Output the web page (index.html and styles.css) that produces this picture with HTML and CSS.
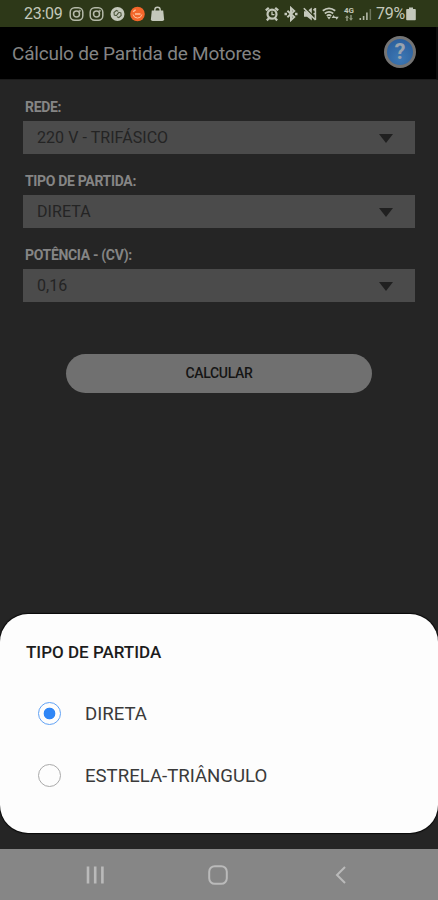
FILE: index.html
```html
<!doctype html>
<html lang="pt-BR">
<head>
    <meta charset="UTF-8">
    <title>Cálculo de Partida de Motores</title>
    <link rel="stylesheet" href="styles.css">
</head>
<body>
<div class="phone">
    <div class="status">
        <span class="clock">23:09</span>
        <div class="notices">
            <svg width="15" height="16" viewBox="0 0 15 16" fill="none" stroke="#b4b9a8" stroke-width="1.5">
                <rect x="1.2" y="1.7" width="12.6" height="12.6" rx="4.5"/>
                <circle cx="7.5" cy="8" r="3"/>
                <circle cx="10.7" cy="4.9" r=".3"/>
            </svg>
            <svg width="15" height="16" viewBox="0 0 15 16" fill="none" stroke="#b4b9a8" stroke-width="1.5">
                <rect x="1.2" y="1.7" width="12.6" height="12.6" rx="4.5"/>
                <circle cx="7.5" cy="8" r="3"/>
                <circle cx="10.7" cy="4.9" r=".3"/>
            </svg>
            <svg width="15" height="16" viewBox="0 0 15 16" fill="none" stroke="#4d573c" stroke-width="1.1">
                <circle cx="7.5" cy="8" r="7" fill="#c4c8bb" stroke="none"/>
                <path d="M8.2 5.2L6.4 4.4 4 6.5l.3 2.6 2 .6 1.7-2M7 10.8l1.8.8 2.4-2.1-.3-2.6-2-.6-1.7 2"/>
            </svg>
            <svg width="15" height="16" viewBox="0 0 15 16" fill="none" stroke="#ffc39d" stroke-width="1.4">
                <circle cx="7.5" cy="8" r="7.3" fill="#f4662a" stroke="none"/>
                <path d="M5 8h5.5M3.2 5.800l2.400-2"/>
                <path d="M3.100 8.500a4.500 4.500 0 0 0 8.800 0" stroke-width="1"/>
            </svg>
            <svg width="15" height="16" viewBox="0 0 15 16" fill="#c4c8bb">
                <path d="M1.8 4.5h11.4l.9 8.800q0 1.700-1.700 1.700H2.600q-1.700 0-1.700-1.700z"/>
                <path d="M4.800 5.800V4a2.700 2.700 0 0 1 5.400 0v1.800" fill="none" stroke="#c4c8bb" stroke-width="1.4"/>
            </svg>
        </div>
        <div class="signals">
            <svg width="14" height="16" viewBox="0 0 14 16" fill="none" stroke="#c4c8bb" stroke-width="2.2">
                <circle cx="7" cy="8.2" r="4.5"/>
                <path d="M7 5.4v3.2h2.4" stroke-width="1.3"/>
                <path d="M.8 4.4l3-2.6M13.2 4.4l-3-2.6M1.8 14.4l2.4-2.4M12.2 14.4l-2.4-2.4"/>
            </svg>
            <svg width="14" height="16" viewBox="0 0 14 16" fill="none" stroke="#c4c8bb" stroke-width="2">
                <path d="M3.4 4.8l6.8 6.3L7 14V2l3.2 2.9-6.8 6.3"/>
                <path d="M.5 8H3M11 8h2.5" stroke-width="2.4"/>
            </svg>
            <svg width="14" height="16" viewBox="0 0 14 16" fill="#c4c8bb">
                <path d="M1 5.3h3l4.800-3.700v12.800L4 10.700H1z"/>
                <path d="M2 1.5l11.600 12" stroke="#2d3818" stroke-width="1.2"/>
                <path d="M.8 2.3L12.500 14M10.500 4.400l2-2.200M10.500 7.800h2.600M12.400 2v12" fill="none" stroke="#c4c8bb" stroke-width="1.6"/>
            </svg>
            <svg width="17" height="16" viewBox="0 0 17 16" fill="none" stroke="#c4c8bb" stroke-width="1.9">
                <path d="M.8 4.7q6.2-4.6 12.4 0M2.8 7.4q4.2-3.1 8.4 0M4.8 9.9q2.2-1.7 4.4 0"/>
                <path d="M5.2 11h3.600L7 13.400z" fill="#c4c8bb" stroke="none"/>
                <path d="M9.600 12l2-3 2 3zM12.700 10.800h4l-2 3z" fill="#c4c8bb" stroke="none"/>
            </svg>
            <div class="net">
                <span>4G</span>
                <svg width="8" height="6" viewBox="0 0 8 6" fill="#929a82">
                    <path d="M0 2.8L2 .3l2 2.5H2.700V6H1.300V2.800zM4 3.200l2 2.500 2-2.500H6.700V0H5.300v3.200z"/>
                </svg>
            </div>
            <svg width="13" height="16" viewBox="0 0 13 16">
                <path d="M.5 14v-2h1.600v2zM3.800 14v-4h1.600v4zM7.100 14V6.600h1.600V14z" fill="#b4b9a8"/>
                <path d="M10.600 14V3h1.500v11z" fill="#6c755b"/>
            </svg>
        </div>
        <span class="percent">79%</span>
        <svg width="10" height="16" viewBox="0 0 10 16" fill="#c4c8bb">
            <path d="M3 1.500h4v1.600h2q.8 0 .8.800v9.500q0 .8-.8.800H1q-.8 0-.8-.800V3.900q0-.8.800-.8h2z"/>
        </svg>
    </div>
    <div class="appbar">
        <h1>Cálculo de Partida de Motores</h1>
        <div class="help">?</div>
    </div>
    <div class="form">
        <label>REDE:</label>
        <div class="select"><span>220 V - TRIFÁSICO</span><i></i></div>
        <label>TIPO DE PARTIDA:</label>
        <div class="select"><span>DIRETA</span><i></i></div>
        <label>POTÊNCIA - (CV):</label>
        <div class="select"><span>0,16</span><i></i></div>
        <button class="calc">CALCULAR</button>
    </div>
    <div class="sheet">
        <h2>TIPO DE PARTIDA</h2>
        <ul>
            <li class="on"><b></b><span>DIRETA</span></li>
            <li><b></b><span>ESTRELA-TRIÂNGULO</span></li>
        </ul>
    </div>
    <div class="nav">
        <svg width="20" height="20" viewBox="0 0 20 20" fill="none" stroke="#bababa" stroke-width="2.6">
            <path d="M3 1.5v17M10.200 1.500v17M17.400 1.500v17"/>
        </svg>
        <svg width="20" height="20" viewBox="0 0 20 20" fill="none" stroke="#bababa" stroke-width="2">
            <rect x="1.2" y="1.2" width="17.6" height="17.6" rx="5.5"/>
        </svg>
        <svg width="20" height="20" viewBox="0 0 20 20" fill="none" stroke="#bababa" stroke-width="2">
            <path d="M14 2L6 10l8 8"/>
        </svg>
    </div>
</div>
</body>
</html>
```
FILE: styles.css
```css
* {
    margin: 0;
    padding: 0;
    box-sizing: border-box;
    list-style: none;
}

body {
    background: #252525;
    font-family: Roboto, "Liberation Sans", sans-serif;
}

.phone {
    width: 438px;
    height: 900px;
    display: flex;
    flex-direction: column;
    overflow: hidden;
    white-space: nowrap;
}

.status {
    height: 27px;
    padding: 0 22px 0 24px;
    display: flex;
    align-items: center;
    background: #2d3818;
    color: #c4c8bb;
    font-size: 16px;
}

.clock {
    width: 45px;
    letter-spacing: -0.3px;
}

.notices {
    display: flex;
    gap: 5.3px;
    flex: 1;
}

.signals {
    display: flex;
    gap: 5px;
}

.net {
    width: 10px;
    display: flex;
    flex-direction: column;
    align-items: center;
    padding-top: 1px;
    font-size: 8px;
    line-height: 8px;
    font-weight: bold;
}

.percent {
    margin: 0 1px 0 4px;
    letter-spacing: -0.2px;
}

.appbar {
    height: 53px;
    padding: 0 20px 2px 12px;
    display: flex;
    align-items: center;
    justify-content: space-between;
    background: #000;
    border-right: 2px solid #0c0c0c;
    border-bottom: 1px solid #1c1c1c;
}

.appbar h1 {
    padding-top: 2px;
    color: #848484;
    font-size: 19px;
    font-weight: normal;
    letter-spacing: -0.21px;
}

.help {
    width: 32px;
    height: 32px;
    border: 3px solid #747474;
    border-radius: 50%;
    background: radial-gradient(circle at 50% 75%, #3d78b4, #285a98);
    color: #9aa3ae;
    font-size: 22px;
    font-weight: bold;
    line-height: 26px;
    text-align: center;
}

.form {
    height: 534px;
    padding: 17px 23px 0;
    display: flex;
    flex-direction: column;
}

.form label {
    height: 24px;
    padding-left: 2px;
    color: #858585;
    font-size: 14px;
    font-weight: bold;
    line-height: 20px;
    letter-spacing: -0.33px;
}

.select {
    height: 33px;
    margin-bottom: 17px;
    padding: 0 22px 0 14px;
    display: flex;
    align-items: center;
    justify-content: space-between;
    background: #4b4b4b;
    color: #242424;
    font-size: 16px;
    letter-spacing: 0.06px;
}

.select i {
    margin-top: 2px;
    border: 7px solid transparent;
    border-top: 9px solid #202020;
    border-bottom: 0;
}

.calc {
    width: 306px;
    height: 39px;
    margin: 35px 0 0 43px;
    padding-bottom: 1px;
    border: 0;
    border-radius: 20px;
    background: #707070;
    color: #151515;
    font-family: inherit;
    font-size: 14px;
    font-weight: 500;
    letter-spacing: -0.3px;
}

.sheet {
    height: 219px;
    padding: 28px 26px 0;
    border-radius: 28px;
    background: #fdfdfd;
    box-shadow: 0 0 1px 1px #090909;
}

.sheet h2 {
    height: 40px;
    color: #1c1c1c;
    font-size: 17px;
    font-weight: 500;
    line-height: 20px;
}

.sheet li {
    height: 62px;
    padding-left: 12px;
    display: flex;
    align-items: center;
    color: #3a3a3a;
    font-size: 18.6px;
}

.sheet li span {
    padding-top: 2px;
}

.sheet li b {
    width: 23px;
    height: 23px;
    margin-right: 24px;
    border: 1.5px solid #aaa;
    border-radius: 50%;
}

.sheet li.on b {
    border-color: #60a2f5;
    background: radial-gradient(circle, #2f86f6 5.5px, #fdfdfd 6.2px);
}

.nav {
    height: 51px;
    margin-top: 16px;
    padding: 0 87px 0 85px;
    display: flex;
    align-items: center;
    justify-content: space-between;
    background: #868686;
}
```
